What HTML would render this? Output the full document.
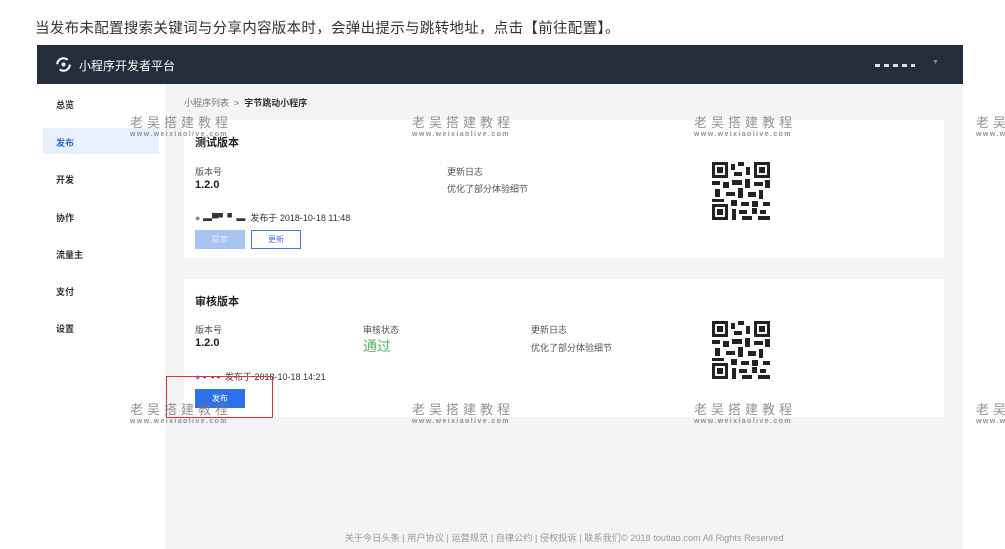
<!DOCTYPE html>
<html><head><meta charset="utf-8"><style>
*{margin:0;padding:0;box-sizing:border-box}
html,body{width:1005px;height:549px;overflow:hidden}
body{background:#fff;font-family:"Liberation Sans","Noto Sans CJK SC",sans-serif;position:relative;color:#333}
.a{position:absolute}
.top{left:35px;top:17px;font-size:14.5px;color:#333;white-space:nowrap;letter-spacing:0.3px}
.shot{left:37px;top:45px;width:926px;height:504px;background:#f3f4f6}
.hdr{left:0;top:0;width:926px;height:39px;background:#232d3b;color:#fff;font-size:12px}
.side{left:0;top:39px;width:128px;height:465px;background:#fff}
.side div{position:absolute;left:19px;font-size:9px;color:#333;font-weight:bold}
.card{background:#fff;left:147px;width:760px;height:138px}
.s{font-size:9px;color:#555}
.b{font-weight:bold;color:#222}
.wm{position:absolute;color:rgba(120,120,120,.8);white-space:nowrap;width:110px;height:30px;overflow:visible}
.wm .c{font-size:13px;letter-spacing:4px;line-height:14px}
.wm .u{font-size:7px;letter-spacing:1.4px;font-weight:bold;line-height:9px}
.qr{width:58px;height:58px;overflow:hidden}
</style></head><body>
<svg width="0" height="0" style="position:absolute"><defs>
<g id="q">
<rect width="58" height="58" fill="#fff"/>
<g fill="#222">
<rect x="0" y="0" width="16" height="16"/><rect x="42" y="0" width="16" height="16"/><rect x="0" y="42" width="16" height="16"/>
</g>
<g fill="#fff"><rect x="3" y="3" width="10" height="10"/><rect x="45" y="3" width="10" height="10"/><rect x="3" y="45" width="10" height="10"/></g>
<g fill="#222"><rect x="5" y="5" width="6" height="6"/><rect x="47" y="5" width="6" height="6"/><rect x="5" y="47" width="6" height="6"/>
<rect x="19" y="2" width="4" height="6"/><rect x="26" y="0" width="6" height="4"/><rect x="34" y="5" width="4" height="8"/><rect x="22" y="10" width="8" height="4"/>
<rect x="0" y="19" width="8" height="4"/><rect x="11" y="20" width="6" height="6"/><rect x="20" y="18" width="10" height="5"/><rect x="33" y="17" width="5" height="9"/><rect x="42" y="20" width="9" height="4"/><rect x="53" y="18" width="5" height="8"/>
<rect x="3" y="27" width="5" height="8"/><rect x="14" y="30" width="9" height="4"/><rect x="26" y="26" width="5" height="10"/><rect x="36" y="30" width="8" height="5"/><rect x="47" y="28" width="4" height="9"/>
<rect x="0" y="37" width="12" height="3"/><rect x="19" y="38" width="6" height="6"/><rect x="29" y="40" width="8" height="4"/><rect x="40" y="39" width="6" height="6"/><rect x="51" y="40" width="7" height="4"/>
<rect x="20" y="47" width="4" height="11"/><rect x="27" y="48" width="8" height="4"/><rect x="30" y="54" width="10" height="4"/><rect x="40" y="46" width="5" height="6"/><rect x="48" y="48" width="6" height="4"/><rect x="46" y="54" width="12" height="4"/></g>
</g></defs></svg>
<div class="a top">当发布未配置搜索关键词与分享内容版本时，会弹出提示与跳转地址，点击【前往配置】。</div>
<div class="a shot">
 <div class="a hdr">
  <svg class="a" style="left:18px;top:11px" width="17" height="17" viewBox="0 0 17 17"><circle cx="8.5" cy="8.5" r="6.3" fill="none" stroke="#fff" stroke-width="2" stroke-dasharray="14 6"/><circle cx="8.5" cy="8.5" r="2" fill="#fff"/></svg>
  <div class="a" style="left:42px;top:12px">小程序开发者平台</div>
  <div class="a" style="left:838px;top:19px;width:40px;height:3px;background:repeating-linear-gradient(90deg,#ddd 0 5px,transparent 5px 9px)"></div>
  <div class="a" style="left:895px;top:14px;font-size:7px;color:#888">▼</div>
 </div>
 <div class="a side">
  <div style="top:14px">总览</div>
  <div style="top:44px;left:6px;width:116px;height:26px;background:#e8f0fd"></div>
  <div style="top:52px;color:#2f6fe0">发布</div>
  <div style="top:89px">开发</div>
  <div style="top:127px">协作</div>
  <div style="top:164px">流量主</div>
  <div style="top:201px">支付</div>
  <div style="top:238px">设置</div>
 </div>
 <div class="a s" style="left:147px;top:51px;font-size:9px;color:#777">小程序列表 &nbsp;&gt;&nbsp; <b style="color:#333">字节跳动小程序</b></div>
 <div class="a card" style="top:75px">
  <div class="a b" style="left:11px;top:14px;font-size:11px">测试版本</div>
  <div class="a s" style="left:11px;top:45px">版本号</div>
  <div class="a b" style="left:11px;top:59px;font-size:11px">1.2.0</div>
  <div class="a s" style="left:263px;top:45px">更新日志</div>
  <div class="a s" style="left:263px;top:62px">优化了部分体验细节</div>
  <svg class="a qr" style="left:528px;top:42px" viewBox="0 0 58 58"><use href="#q"/></svg>
  <div class="a s" style="left:11px;top:91px;color:#333"><span style="color:#7b8bb5">●</span> ▬▀▘▘▬ &nbsp;发布于 2018-10-18 11:48</div>
  <div class="a" style="left:11px;top:110px;width:50px;height:19px;background:#a9c4f3;color:#e0eaff;font-size:8px;text-align:center;line-height:19px">提审</div>
  <div class="a" style="left:67px;top:110px;width:50px;height:19px;border:1px solid #3a78e6;color:#3a78e6;font-size:8px;text-align:center;line-height:17px">更新</div>
 </div>
 <div class="a card" style="top:234px">
  <div class="a b" style="left:11px;top:14px;font-size:11px">审核版本</div>
  <div class="a s" style="left:11px;top:44px">版本号</div>
  <div class="a b" style="left:11px;top:58px;font-size:11px">1.2.0</div>
  <div class="a s" style="left:179px;top:44px">审核状态</div>
  <div class="a" style="left:179px;top:57px;font-size:14px;color:#5ab55a">通过</div>
  <div class="a s" style="left:347px;top:44px">更新日志</div>
  <div class="a s" style="left:347px;top:62px">优化了部分体验细节</div>
  <svg class="a qr" style="left:528px;top:42px" viewBox="0 0 58 58"><use href="#q"/></svg>
  <div class="a s" style="left:11px;top:91px;color:#333"><span style="color:#7b8bb5">●</span> ▪ &nbsp;▪ ▪ &nbsp;发布于 2018-10-18 14:21</div>
  <div class="a" style="left:11px;top:110px;width:50px;height:19px;background:#2f6fe8;color:#fff;font-size:8px;text-align:center;line-height:19px">发布</div>
 </div>
 <div class="a" style="left:128px;top:485px;width:798px;text-align:center;font-size:9.2px;color:#999">关于今日头条 | 用户协议 | 运营规范 | 自律公约 | 侵权投诉 | 联系我们© 2018 toutiao.com All Rights Reserved</div>
</div>
<div class="a" style="left:166px;top:376px;width:107px;height:42px;border:1.5px solid #e03030"></div>
<div class="wm" style="left:130px;top:116px"><div class="c">老吴搭建教程</div><div class="u">www.weixiaolive.com</div></div>
<div class="wm" style="left:412px;top:116px"><div class="c">老吴搭建教程</div><div class="u">www.weixiaolive.com</div></div>
<div class="wm" style="left:694px;top:116px"><div class="c">老吴搭建教程</div><div class="u">www.weixiaolive.com</div></div>
<div class="wm" style="left:976px;top:116px;width:29px;overflow:hidden"><div class="c">老吴搭建教程</div><div class="u">www.weixiaolive.com</div></div>
<div class="wm" style="left:130px;top:403px"><div class="c">老吴搭建教程</div><div class="u">www.weixiaolive.com</div></div>
<div class="wm" style="left:412px;top:403px"><div class="c">老吴搭建教程</div><div class="u">www.weixiaolive.com</div></div>
<div class="wm" style="left:694px;top:403px"><div class="c">老吴搭建教程</div><div class="u">www.weixiaolive.com</div></div>
<div class="wm" style="left:976px;top:403px;width:29px;overflow:hidden"><div class="c">老吴搭建教程</div><div class="u">www.weixiaolive.com</div></div>
</body></html>
